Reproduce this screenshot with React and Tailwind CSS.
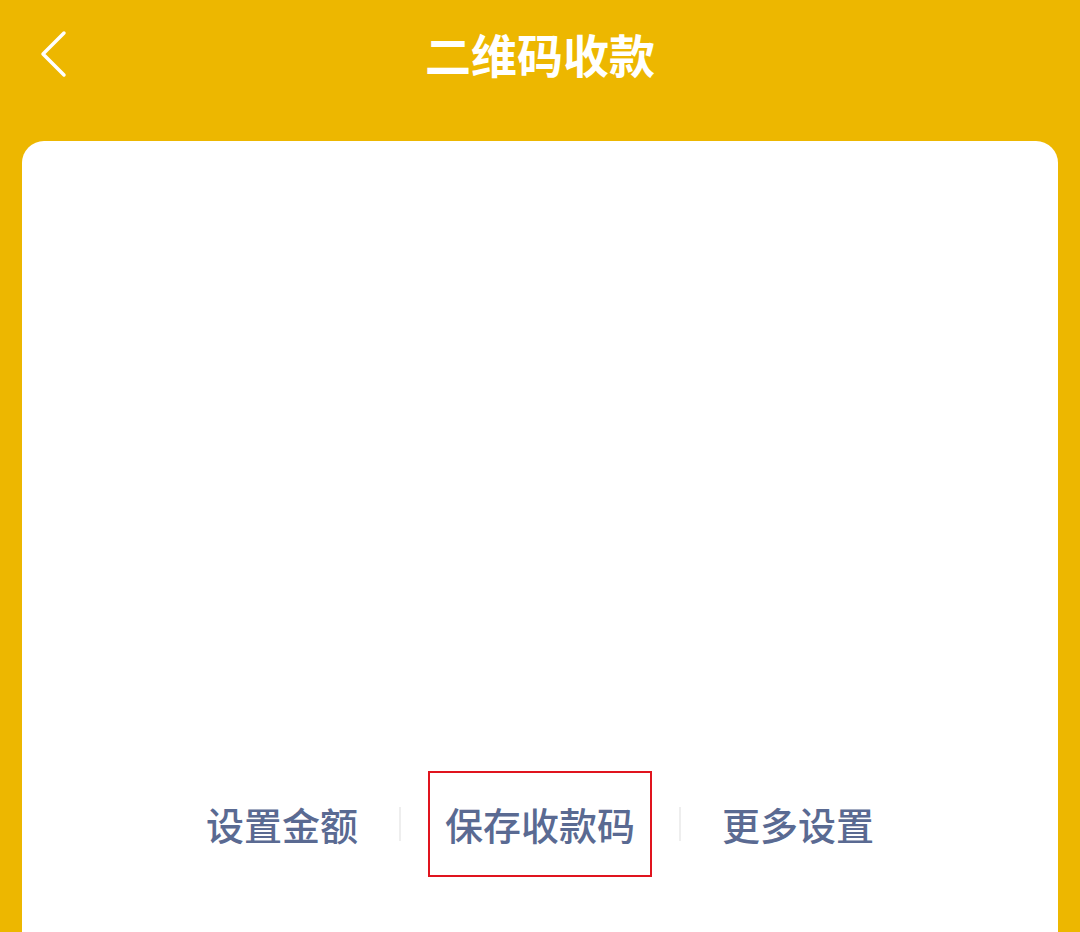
import React from "react";

function App() {
    const font = { fontFamily: '"Noto Sans CJK SC", "Noto Sans", sans-serif' };

    return (
        <div className="w-[1080px] h-[932px] overflow-hidden bg-[#edb700] flex flex-col" style={font}>
            {/* header */}
            <div className="relative h-[112px] flex items-center justify-center">
                <button className="absolute left-[38px] top-[30px] w-[32px] h-[48px]">
                    <svg width="32" height="48" viewBox="0 0 32 48" fill="none">
                        <path d="M26 3 L5 24 L26 45" stroke="#fff" strokeWidth="3.5" strokeLinecap="round" strokeLinejoin="round" />
                    </svg>
                </button>
                <h1 className="text-white text-[46px] font-bold leading-none -mt-[6px]">二维码收款</h1>
            </div>

            {/* card */}
            <div className="mx-[22px] mt-[29px] flex-1 bg-white rounded-t-[22px] flex flex-col">
                <div className="h-[630px]"></div>
                <div className="flex items-center justify-center text-[#5a6a92] text-[38px] font-medium leading-none">
                    <div className="pl-[44px] pr-[41px] py-[28px]">设置金额</div>
                    <div className="w-[2px] h-[34px] bg-[#eeeeee]"></div>
                    <div className="mx-[27px] px-[15px] h-[106px] flex items-center border-2 border-[#e0141e]">保存收款码</div>
                    <div className="w-[2px] h-[34px] bg-[#eeeeee]"></div>
                    <div className="pl-[41px] pr-[44px] py-[28px]">更多设置</div>
                </div>
            </div>
        </div>
    );
}

export default App;
